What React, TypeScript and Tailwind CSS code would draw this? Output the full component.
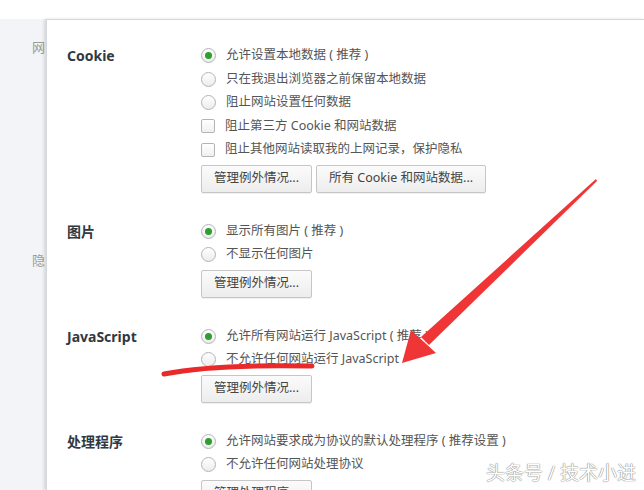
import React from "react";

type Opt = { kind: "radio" | "check"; text: string; on?: boolean };

const sections: { label: string; options: Opt[]; buttons: string[] }[] = [
  {
    label: "Cookie",
    options: [
      { kind: "radio", text: "允许设置本地数据 ( 推荐 )", on: true },
      { kind: "radio", text: "只在我退出浏览器之前保留本地数据" },
      { kind: "radio", text: "阻止网站设置任何数据" },
      { kind: "check", text: "阻止第三方 Cookie 和网站数据" },
      { kind: "check", text: "阻止其他网站读取我的上网记录，保护隐私" },
    ],
    buttons: ["管理例外情况...", "所有 Cookie 和网站数据..."],
  },
  {
    label: "图片",
    options: [
      { kind: "radio", text: "显示所有图片 ( 推荐 )", on: true },
      { kind: "radio", text: "不显示任何图片" },
    ],
    buttons: ["管理例外情况..."],
  },
  {
    label: "JavaScript",
    options: [
      { kind: "radio", text: "允许所有网站运行 JavaScript ( 推荐 )", on: true },
      { kind: "radio", text: "不允许任何网站运行 JavaScript" },
    ],
    buttons: ["管理例外情况..."],
  },
  {
    label: "处理程序",
    options: [
      { kind: "radio", text: "允许网站要求成为协议的默认处理程序 ( 推荐设置 )", on: true },
      { kind: "radio", text: "不允许任何网站处理协议" },
    ],
    buttons: ["管理处理程序..."],
  },
];

const Control = ({ kind, on }: { kind: Opt["kind"]; on?: boolean }) => {
  if (kind === "check") {
    return (
      <span className="w-[14px] h-[14px] rounded-[2px] border border-[#b4b4b4] bg-gradient-to-b from-white to-[#f0f0f0] shrink-0" />
    );
  }
  return (
    <span className="w-[15px] h-[15px] rounded-full border border-[#b4b4b4] bg-gradient-to-b from-white to-[#ececec] shrink-0 flex items-center justify-center">
      {on && <span className="w-[7px] h-[7px] rounded-full bg-[#2f9e2f]" />}
    </span>
  );
};

export default function App() {
  return (
    <div
      className="relative w-[644px] h-[490px] overflow-hidden bg-white"
      style={{ fontFamily: '"Noto Sans", "Noto Sans CJK SC", sans-serif' }}
    >
      <div className="h-[19px]" />
      <div className="flex h-[471px]">
        {/* left nav strip, mostly covered by the settings panel */}
        <div className="w-[46px] shrink-0 bg-[#f2f4f7] text-[13px] text-[#9a9a9a] whitespace-nowrap">
          <div className="pl-[32px] pt-[19px]">网</div>
          <div className="pl-[32px] pt-[193px]">隐</div>
        </div>

        <div className="flex-1 border-l border-t border-[#d4d7db] shadow-[-2px_0_3px_rgba(0,0,0,0.12)] pl-[20px] pt-[24px] flex flex-col gap-[27px]">
          {sections.map((s) => (
            <div key={s.label} className="flex">
              <div className="w-[134px] h-[23.5px] flex items-center text-[14px] font-bold text-[#303942] shrink-0">
                {s.label}
              </div>
              <div className="flex flex-col">
                {s.options.map((o) => (
                  <div key={o.text} className="h-[23.5px] flex items-center gap-[10px] text-[12.5px] text-[#555] whitespace-pre">
                    <Control kind={o.kind} on={o.on} />
                    <span>{o.text}</span>
                  </div>
                ))}
                <div className="flex gap-[4px] mt-[3px]">
                  {s.buttons.map((b) => (
                    <button
                      key={b}
                      className="h-[28px] px-[12px] rounded-[2px] border border-[#c6c6c6] bg-gradient-to-b from-[#fbfbfb] to-[#ededed] shadow-[0_1px_0_rgba(0,0,0,0.06)] text-[12.5px] text-[#444] whitespace-nowrap"
                    >
                      {b}
                    </button>
                  ))}
                </div>
              </div>
            </div>
          ))}
        </div>
      </div>

      {/* red annotation: underline stroke and arrow */}
      <svg className="absolute inset-0 pointer-events-none" width="644" height="490" viewBox="0 0 644 490">
        <path d="M164 374 Q 215 364 312 366" stroke="#ea2a2a" strokeWidth="5" strokeLinecap="round" fill="none" />
        <polygon points="596,179 597,181 429,345 421,337" fill="#ef3535" />
        <polygon points="402,363 411,330 436,353" fill="#ef3535" />
      </svg>

      <div className="absolute left-[486px] top-[459px] text-[19px] text-white [text-shadow:0_0_1px_#777,0_0_1px_#777]">
        头条号 / 技术小进
      </div>
    </div>
  );
}
